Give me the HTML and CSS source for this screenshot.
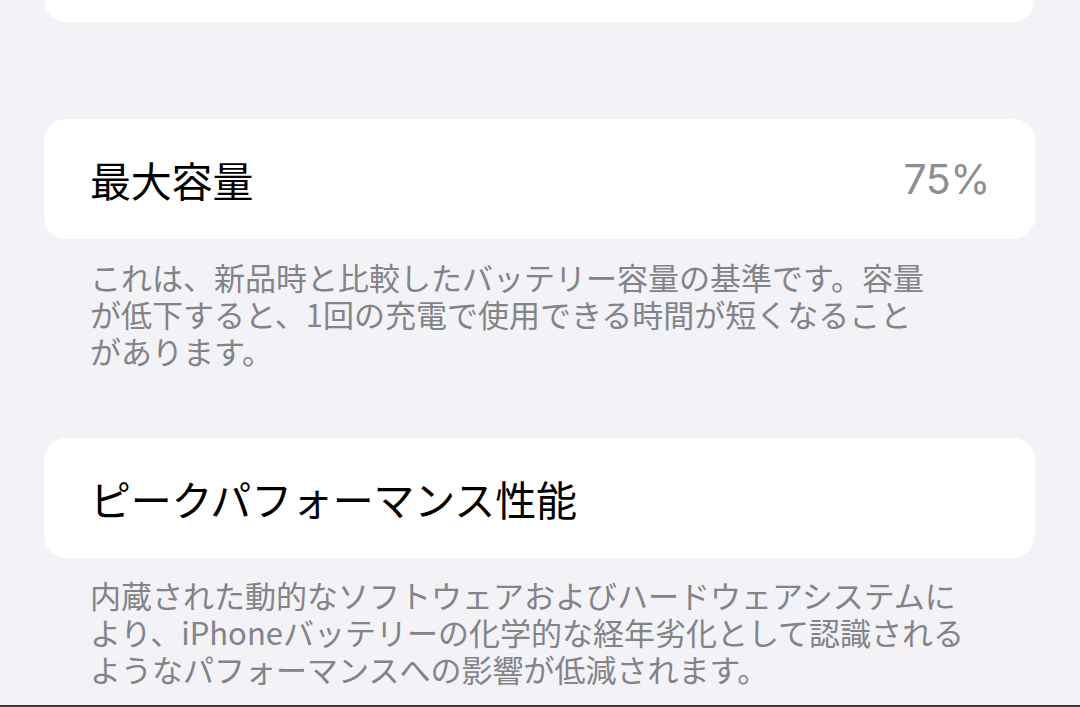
FILE: index.html
```html
<!DOCTYPE html>
<html lang="ja">

<head>
	<meta charset="utf-8">
	<meta name="viewport" content="width=device-width">
	<title>バッテリーの状態</title>
	<link rel="stylesheet" href="styles.css">
</head>

<body>
	<main class="List">
		<div class="Card CardTop"></div>

		<section class="Group">
			<div class="Card">
				<span class="Label">最大容量</span>
				<span class="Value">75%</span>
			</div>
			<p class="Note">これは、新品時と比較したバッテリー容量の基準です。容量<br>が低下すると、1回の充電で使用できる時間が短くなること<br>があります。</p>
		</section>

		<section class="Group GroupPeak">
			<div class="Card">
				<span class="Label">ピークパフォーマンス性能</span>
			</div>
			<p class="Note NotePeak">内蔵された動的なソフトウェアおよびハードウェアシステムに<br>より、iPhoneバッテリーの化学的な経年劣化として認識される<br>ようなパフォーマンスへの影響が低減されます。</p>
		</section>
	</main>
	<div class="Edge"></div>
</body>

</html>
```

FILE: styles.css
```css
html, body {
	height: 100%;
	margin: 0;
	padding: 0;
}

body {
	display: flex;
	flex-flow: column;
	overflow: hidden;
	background: #f2f2f7;
	font-family: "Noto Sans CJK JP", "Noto Sans", sans-serif;
	color: #000;
}

.List {
	padding: 0 45px 0 44px;
}

.Card {
	height: 120px;
	display: flex;
	align-items: center;
	justify-content: space-between;
	padding: 0 45px 0 46px;
	background: #fff;
	border-radius: 22px;
}

/* the group above, scrolled almost out of view */
.CardTop {
	height: 22px;
	border-radius: 0 0 22px 22px;
}

.Group {
	margin-top: 97px;
}

.GroupPeak {
	margin-top: 69px;
}

.Label {
	font-size: 41px;
	line-height: 48px;
	letter-spacing: -0.2px;
}

.Value {
	font-family: Inter, "Noto Sans", sans-serif;
	font-size: 41px;
	color: #8e8e93;
	letter-spacing: -0.5px;
}

.Note {
	margin: 19px 0 0;
	padding: 0 46px;
	font-size: 31px;
	line-height: 37px;
	color: #838388;
	white-space: nowrap;
}

.NotePeak {
	margin-top: 18px;
}

.Edge {
	margin-top: auto;
	height: 2px;
	background: #3a3a3c;
}
```
